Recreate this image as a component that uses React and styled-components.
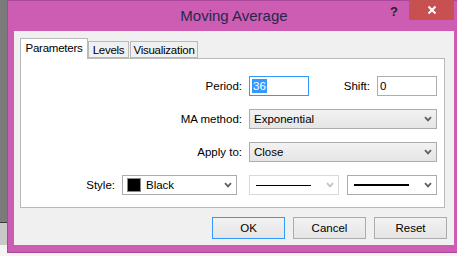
import React from 'react';
import styled, { createGlobalStyle } from 'styled-components';

const GlobalStyle = createGlobalStyle`
  html, body {
    margin: 0;
    padding: 0;
    width: 457px;
    height: 256px;
    overflow: hidden;
    background: #f4f4f4;
  }
  body {
    font-family: "Liberation Sans", Arial, sans-serif;
    font-size: 11.5px;
    color: #000;
  }
`;

const Screen = styled.div`
  display: flex;
  align-items: flex-start;
  width: 457px;
  height: 256px;
  overflow: hidden;
`;

const BackApp = styled.div`
  flex: 0 0 7px;
  height: 245px;
  display: flex;
  flex-direction: column;
`;

const BackDark = styled.div`
  flex: 1;
  background: #7b7b7b;
  border-bottom: 1px solid #3c3c3c;
`;

const BackLight = styled.div`
  height: 22px;
  background: #c8c8c8;
`;

const Window = styled.div`
  flex: 0 0 454px;
  height: 253px;
  box-sizing: border-box;
  background: #cc5db3;
  border: 1px solid #a9479a;
  padding: 0 6px 7px 6px;
  display: flex;
  flex-direction: column;
`;

const TitleBar = styled.div`
  height: 30px;
  display: grid;
  grid-template-columns: 1fr auto 1fr;
  align-items: start;
`;

const Title = styled.div`
  grid-column: 2;
  font-size: 15px;
  line-height: 15px;
  margin-top: 7px;
  color: #27274a;
`;

const Controls = styled.div`
  grid-column: 3;
  justify-self: end;
  display: flex;
  align-items: flex-start;
`;

const HelpButton = styled.div`
  width: 30px;
  height: 20px;
  display: flex;
  align-items: center;
  justify-content: center;
  font-weight: bold;
  font-size: 13px;
  color: #222;
`;

const CloseButton = styled.div`
  width: 45px;
  height: 20px;
  background: #c75050;
  display: flex;
  align-items: center;
  justify-content: center;
  margin-top: -1px;
`;

const Client = styled.div`
  flex: 1;
  background: #f0f0f0;
  padding: 7px 9px 0 6px;
  display: flex;
  flex-direction: column;
`;

const TabRow = styled.div`
  display: flex;
  align-items: flex-end;
  height: 20px;
`;

const Tab = styled.div`
  box-sizing: border-box;
  width: ${({ w }) => w}px;
  height: ${({ active }) => (active ? 21 : 17)}px;
  margin-bottom: ${({ active }) => (active ? -1 : 0)}px;
  margin-right: ${({ active }) => (active ? 0 : 1)}px;
  position: relative;
  z-index: ${({ active }) => (active ? 1 : 0)};
  background: ${({ active }) => (active ? '#fff' : '#f0f0f0')};
  border: 1px solid #b9b9b9;
  border-bottom: ${({ active }) => (active ? 'none' : '1px solid #b9b9b9')};
  display: flex;
  align-items: center;
  justify-content: center;
  letter-spacing: -0.25px;
  padding-bottom: ${({ active }) => (active ? 2 : 0)}px;
`;

const Panel = styled.div`
  box-sizing: border-box;
  height: 150px;
  background: #fff;
  border: 1px solid #b9b9b9;
  padding: 17px 7px 0 0;
  display: flex;
  flex-direction: column;
  gap: 13px;
`;

const Row = styled.div`
  display: flex;
  justify-content: flex-end;
  align-items: center;
  height: 20px;
`;

const Label = styled.span`
  margin-right: 7px;
`;

const Group = styled.div`
  display: flex;
  justify-content: flex-end;
  align-items: center;
  width: ${({ w }) => w}px;
`;

const TextInput = styled.div`
  box-sizing: border-box;
  width: 60px;
  height: 20px;
  border: 1px solid ${({ focus }) => (focus ? '#3399ff' : '#abadb3')};
  background: #fff;
  display: flex;
  align-items: center;
  padding-left: 2px;
`;

const Selected = styled.span`
  background: #3399ff;
  color: #fff;
  padding: 0 1px;
  line-height: 14px;
`;

const Select = styled.div`
  box-sizing: border-box;
  width: ${({ w }) => w}px;
  height: 20px;
  margin-left: ${({ gap }) => gap || 0}px;
  border: 1px solid ${({ disabled }) => (disabled ? '#d9d9d9' : '#acacac')};
  background: ${({ flat }) => (flat ? '#fff' : 'linear-gradient(#f2f2f2, #e5e5e5)')};
  display: flex;
  align-items: center;
  padding: 0 4px 0 4px;
  gap: 5px;
`;

const SelectText = styled.span`
  flex: 1;
`;

const Swatch = styled.span`
  width: 12px;
  height: 12px;
  background: #000;
  border: 1px solid #8a8a8a;
`;

const LineSample = styled.span`
  flex: 1;
  margin: 0 10px 0 2px;
  height: ${({ weight }) => weight}px;
  background: #000;
`;

const ButtonRow = styled.div`
  display: flex;
  justify-content: flex-end;
  gap: 8px;
  margin: 9px -2px 0 0;
`;

const Button = styled.div`
  box-sizing: border-box;
  width: 73px;
  height: 22px;
  border: 1px solid ${({ primary }) => (primary ? '#3399ff' : '#acacac')};
  background: linear-gradient(#f2f2f2, #e5e5e5);
  display: flex;
  align-items: center;
  justify-content: center;
`;

function Chevron({ disabled }) {
  return (
    <svg width="8" height="6" viewBox="0 0 8 6">
      <path d="M1 1.2 L4 4.4 L7 1.2" fill="none" stroke={disabled ? '#c4c4c4' : '#606060'} strokeWidth="1.8" />
    </svg>
  );
}

export default function App() {
  return (
    <>
      <GlobalStyle />
      <Screen>
        <BackApp>
          <BackDark />
          <BackLight />
        </BackApp>
        <Window>
          <TitleBar>
            <Title>Moving Average</Title>
            <Controls>
              <HelpButton>?</HelpButton>
              <CloseButton>
                <svg width="10" height="10" viewBox="0 0 10 10">
                  <path d="M1.5 1.5 L8.5 8.5 M8.5 1.5 L1.5 8.5" stroke="#fff" strokeWidth="2" />
                </svg>
              </CloseButton>
            </Controls>
          </TitleBar>
          <Client>
            <TabRow>
              <Tab active w={68}>Parameters</Tab>
              <Tab w={41}>Levels</Tab>
              <Tab w={68}>Visualization</Tab>
            </TabRow>
            <Panel>
              <Row>
                <Label>Period:</Label>
                <TextInput focus>
                  <Selected>36</Selected>
                </TextInput>
                <Group w={128}>
                  <Label>Shift:</Label>
                  <TextInput>0</TextInput>
                </Group>
              </Row>
              <Row>
                <Label>MA method:</Label>
                <Select w={188}>
                  <SelectText>Exponential</SelectText>
                  <Chevron />
                </Select>
              </Row>
              <Row>
                <Label>Apply to:</Label>
                <Select w={188}>
                  <SelectText>Close</SelectText>
                  <Chevron />
                </Select>
              </Row>
              <Row>
                <Label>Style:</Label>
                <Select w={115} flat>
                  <Swatch />
                  <SelectText>Black</SelectText>
                  <Chevron />
                </Select>
                <Select w={90} gap={12} flat disabled>
                  <LineSample weight={1} />
                  <Chevron disabled />
                </Select>
                <Select w={90} gap={8} flat>
                  <LineSample weight={2} />
                  <Chevron />
                </Select>
              </Row>
            </Panel>
            <ButtonRow>
              <Button primary>OK</Button>
              <Button>Cancel</Button>
              <Button>Reset</Button>
            </ButtonRow>
          </Client>
        </Window>
      </Screen>
    </>
  );
}
